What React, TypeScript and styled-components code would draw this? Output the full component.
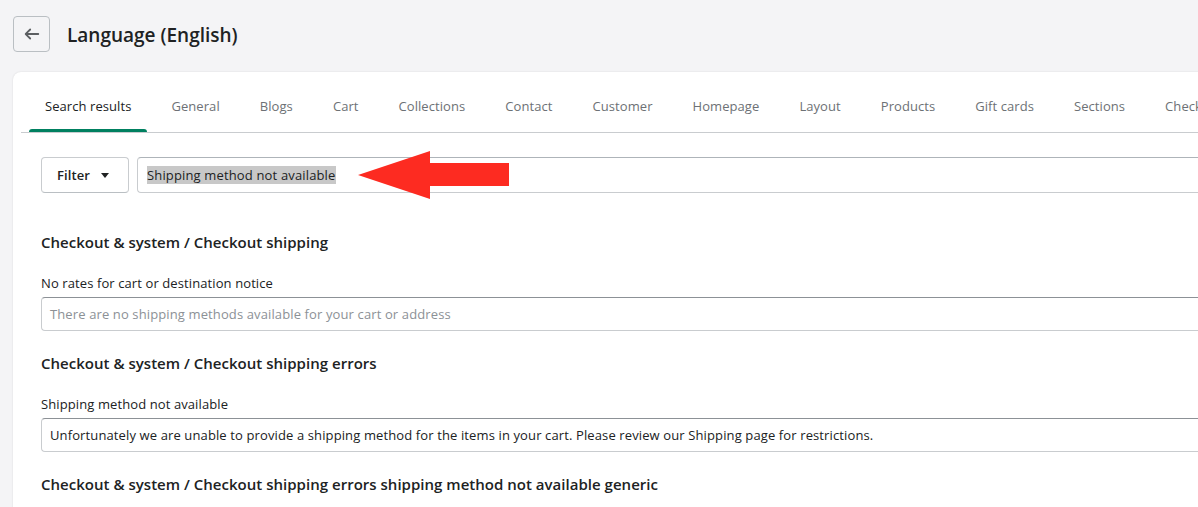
import React from "react";
import styled, { createGlobalStyle } from "styled-components";

const Global = createGlobalStyle`
  html, body { margin: 0; padding: 0; background: #f4f4f6; overflow: hidden; }
  body { font-family: "Open Sans", "Noto Sans", sans-serif; color: #202223; letter-spacing: 0.1px; }
`;

const Page = styled.div`
  width: 1198px;
  height: 507px;
  overflow: hidden;
  padding: 16px 0 0 13px;
  box-sizing: border-box;
`;

const Header = styled.div`
  display: flex;
  align-items: center;
  gap: 17px;
  height: 36px;
`;

const BackButton = styled.button`
  width: 37px;
  height: 36px;
  box-sizing: border-box;
  border: 1px solid #babfc3;
  border-radius: 4px;
  background: #f4f4f6;
  display: flex;
  align-items: center;
  justify-content: center;
  padding: 0;
  color: #5c5f62;
`;

const Title = styled.h1`
  margin: 2px 0 0;
  font-size: 19px;
  font-weight: 600;
  color: #202223;
  letter-spacing: 0;
`;

const Card = styled.div`
  margin-top: 20px;
  width: 1300px;
  background: #fff;
  border-radius: 8px 0 0 0;
  box-shadow: 0 0 2px rgba(0, 0, 0, 0.12);
  padding: 0 0 0 8px;
  height: 480px;
`;

const TabBar = styled.div`
  display: flex;
  height: 60px;
  border-bottom: 1px solid #c9cccf;
  padding-left: 8px;
  gap: 8px;
`;

const Tab = styled.div<{ $active?: boolean }>`
  position: relative;
  padding: 8px 16px 0;
  display: flex;
  align-items: center;
  box-sizing: border-box;
  font-size: 13px;
  letter-spacing: 0.07px;
  white-space: nowrap;
  color: ${(p) => (p.$active ? "#202223" : "#6d7175")};
  &::after {
    content: "";
    display: ${(p) => (p.$active ? "block" : "none")};
    position: absolute;
    left: 0;
    right: 0;
    bottom: 0;
    height: 3px;
    border-radius: 3px 3px 0 0;
    background: #008060;
  }
`;

const Content = styled.div`
  padding: 24px 0 0 20px;
`;

const FilterRow = styled.div`
  display: flex;
  gap: 8px;
  position: relative;
`;

const FilterButton = styled.button`
  width: 88px;
  height: 36px;
  box-sizing: border-box;
  border: 1px solid #c9cccf;
  border-bottom-color: #babfc3;
  border-radius: 4px;
  background: #fff;
  font-family: inherit;
  font-size: 13px;
  font-weight: 600;
  letter-spacing: 0.1px;
  color: #202223;
  display: flex;
  align-items: center;
  justify-content: flex-start;
  gap: 11px;
  padding: 0 0 0 15px;
`;

const Caret = styled.span`
  width: 0;
  height: 0;
  border-left: 4px solid transparent;
  border-right: 4px solid transparent;
  border-top: 5px solid #202223;
  margin-top: 1px;
`;

const SearchField = styled.div`
  flex: 1;
  height: 36px;
  box-sizing: border-box;
  border: 1px solid #c9cccf;
  border-top-color: #aeb4b9;
  border-radius: 4px 0 0 4px;
  border-right: none;
  display: flex;
  align-items: center;
  padding-left: 9px;
  font-size: 13px;
  letter-spacing: 0.15px;
  color: #202223;
`;

const Selected = styled.span`
  background: #c8c8c8;
  line-height: 18px;
`;

const Arrow = styled.svg`
  position: absolute;
  left: 317px;
  top: -6px;
`;

const Section = styled.div`
  margin-top: 38px;
  & + & {
    margin-top: 21px;
  }
`;

const SectionTitle = styled.h2`
  margin: 0;
  font-size: 15px;
  font-weight: 600;
  color: #202223;
  line-height: 22px;
  letter-spacing: 0.02px;
`;

const FieldLabel = styled.div`
  margin-top: 21px;
  font-size: 13px;
  line-height: 18px;
  color: #202223;
`;

const TextField = styled.div<{ $placeholder?: boolean }>`
  margin-top: 5px;
  height: 34px;
  box-sizing: border-box;
  border: 1px solid #c9cccf;
  border-top-color: #8c9196;
  border-radius: 4px 0 0 4px;
  border-right: none;
  display: flex;
  align-items: center;
  padding-left: 8px;
  font-size: 13px;
  letter-spacing: 0.12px;
  white-space: nowrap;
  color: ${(p) => (p.$placeholder ? "#8c9196" : "#202223")};
`;

const tabs = [
  "Search results",
  "General",
  "Blogs",
  "Cart",
  "Collections",
  "Contact",
  "Customer",
  "Homepage",
  "Layout",
  "Products",
  "Gift cards",
  "Sections",
  "Checkout",
];

export default function App() {
  return (
    <>
      <Global />
      <Page>
        <Header>
          <BackButton aria-label="Back">
            <svg width="18" height="18" viewBox="0 0 20 20">
              <path
                d="M17 9H5.414l3.293-3.293a1 1 0 0 0-1.414-1.414l-5 5a1 1 0 0 0 0 1.414l5 5a1 1 0 0 0 1.414-1.414L5.414 11H17a1 1 0 1 0 0-2z"
                fill="#5c5f62"
              />
            </svg>
          </BackButton>
          <Title>Language (English)</Title>
        </Header>
        <Card>
          <TabBar>
            {tabs.map((t, i) => (
              <Tab key={t} $active={i === 0}>
                {t}
              </Tab>
            ))}
          </TabBar>
          <Content>
            <FilterRow>
              <FilterButton>
                Filter <Caret />
              </FilterButton>
              <SearchField>
                <Selected>Shipping method not available</Selected>
              </SearchField>
              <Arrow width="154" height="50" viewBox="0 0 154 50">
                <polygon
                  points="0,24 72,0 72,12 151,12 151,35 72,35 72,48"
                  fill="#fd2b21"
                />
              </Arrow>
            </FilterRow>
            <Section>
              <SectionTitle>Checkout &amp; system / Checkout shipping</SectionTitle>
              <FieldLabel>No rates for cart or destination notice</FieldLabel>
              <TextField $placeholder>
                There are no shipping methods available for your cart or address
              </TextField>
            </Section>
            <Section>
              <SectionTitle>Checkout &amp; system / Checkout shipping errors</SectionTitle>
              <FieldLabel>Shipping method not available</FieldLabel>
              <TextField>
                Unfortunately we are unable to provide a shipping method for the items in your cart. Please review our Shipping page for restrictions.
              </TextField>
            </Section>
            <Section>
              <SectionTitle>
                Checkout &amp; system / Checkout shipping errors shipping method not available generic
              </SectionTitle>
            </Section>
          </Content>
        </Card>
      </Page>
    </>
  );
}
